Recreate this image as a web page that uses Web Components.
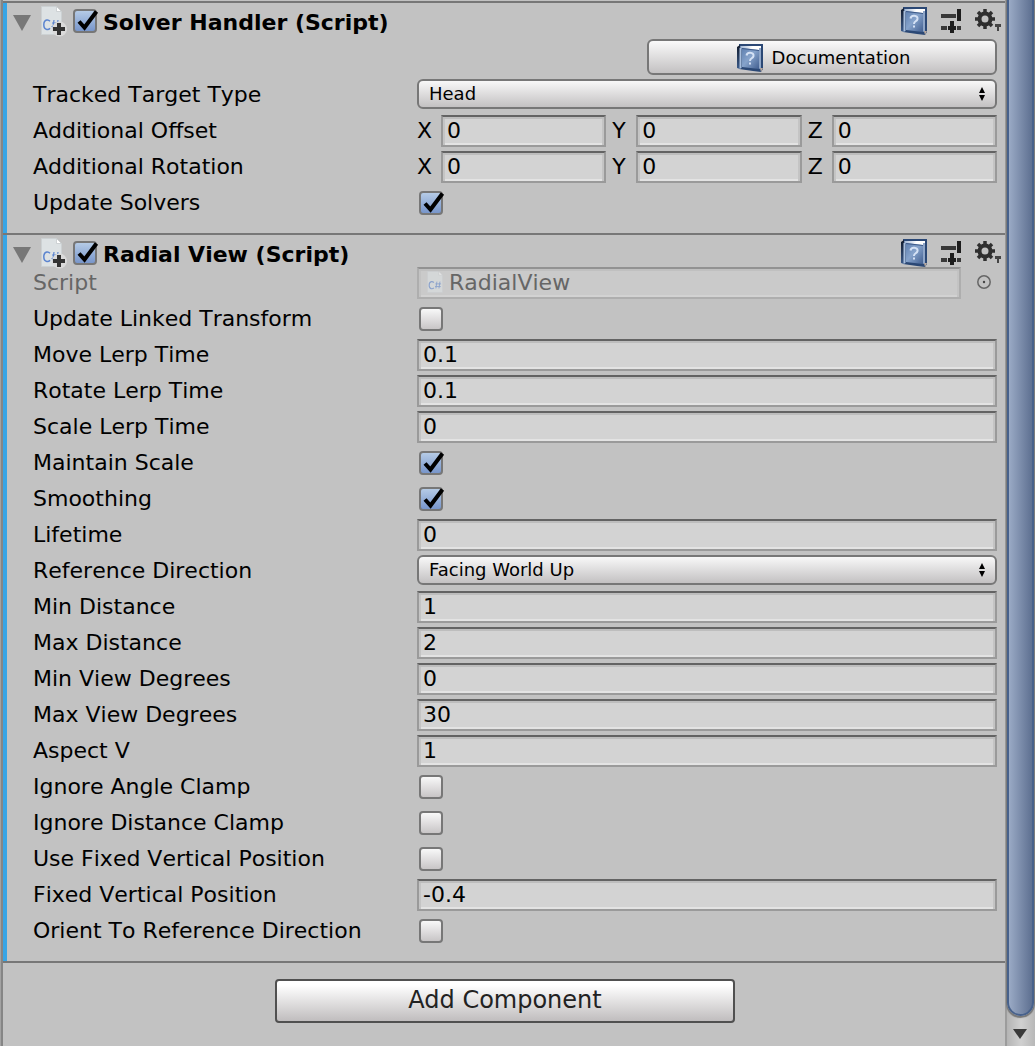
<!DOCTYPE html>
<html lang="en">
<head>
<meta charset="utf-8">
<title>Inspector</title>
<style>
  html, body { height: 100%; }
  body { margin: 0; background: #c2c2c2; color: #000; font: 22px/28px "DejaVu Sans", Verdana, sans-serif; font-kerning: none; overflow: hidden; }
</style>
</head>
<body>
<inspector-window>
  <inspector-section heading="Solver Handler (Script)">
    <doc-button></doc-button>
    <prop-popup label="Tracked Target Type" value="Head"></prop-popup>
    <prop-vector label="Additional Offset"></prop-vector>
    <prop-vector label="Additional Rotation"></prop-vector>
    <prop-toggle label="Update Solvers" checked></prop-toggle>
  </inspector-section>
  <inspector-section heading="Radial View (Script)">
    <prop-object label="Script" value="RadialView"></prop-object>
    <prop-toggle label="Update Linked Transform"></prop-toggle>
    <prop-text label="Move Lerp Time" value="0.1"></prop-text>
    <prop-text label="Rotate Lerp Time" value="0.1"></prop-text>
    <prop-text label="Scale Lerp Time" value="0"></prop-text>
    <prop-toggle label="Maintain Scale" checked></prop-toggle>
    <prop-toggle label="Smoothing" checked></prop-toggle>
    <prop-text label="Lifetime" value="0"></prop-text>
    <prop-popup label="Reference Direction" value="Facing World Up"></prop-popup>
    <prop-text label="Min Distance" value="1"></prop-text>
    <prop-text label="Max Distance" value="2"></prop-text>
    <prop-text label="Min View Degrees" value="0"></prop-text>
    <prop-text label="Max View Degrees" value="30"></prop-text>
    <prop-text label="Aspect V" value="1"></prop-text>
    <prop-toggle label="Ignore Angle Clamp"></prop-toggle>
    <prop-toggle label="Ignore Distance Clamp"></prop-toggle>
    <prop-toggle label="Use Fixed Vertical Position"></prop-toggle>
    <prop-text label="Fixed Vertical Position" value="-0.4"></prop-text>
    <prop-toggle label="Orient To Reference Direction"></prop-toggle>
  </inspector-section>
  <add-button slot="footer">Add Component</add-button>
</inspector-window>

<script>
const BOOK = `<svg width="26" height="28" viewBox="0 0 26 28" aria-hidden="true">
  <defs><linearGradient id="cover" x1="0" y1="0" x2="1" y2="1"><stop offset="0" stop-color="#5f80b0"/><stop offset=".45" stop-color="#86a3cb"/><stop offset="1" stop-color="#425f90"/></linearGradient>
  <linearGradient id="spine" x1="0" y1="0" x2="0" y2="1"><stop offset="0" stop-color="#101a2c"/><stop offset="1" stop-color="#3c5c8c"/></linearGradient>
  <linearGradient id="pages" x1="0" y1="0" x2="1" y2="0"><stop offset="0" stop-color="#9db4d4"/><stop offset=".6" stop-color="#fff"/></linearGradient></defs>
  <path d="M2 0h24v25l-2 3-8-1-14-2z" fill="#2b4875"/>
  <path d="M3 2h21v5L5 5z" fill="url(#pages)"/>
  <path d="M22 4h2v20l-2 1z" fill="#8fa6c8"/>
  <path d="M23 24h3l-2 4z" fill="#b9a99f"/>
  <path d="M0 3l3-2v24l-3-1z" fill="url(#spine)"/>
  <path d="M2.500 4l2-1v21l-2 1z" fill="#a9bfdd"/>
  <path d="M5 4l17 2v19L5 23z" fill="url(#cover)"/>
  <path d="M5 4l17 2v1L5 5z" fill="#3d5a88"/>
  <path d="M9.500 11.500q.5-3 3.800-2.700 3.500.3 3.200 3.200-.2 1.500-2 2.300-1.500.7-1.500 2.700M13 18.500v2" fill="none" stroke="#d5e2f5" stroke-width="2"/>
</svg>`;
const SHEET = `<path d="M.5.500h15l5 5v23H.500z" fill="#dde2e4" stroke="#ccd1d3"/><path d="M15.500.500v5h5z" fill="#fff" stroke="#c5cacc" stroke-width=".8"/>`;
const HASH = `<path d="M9 15.200q-1.300-1.500-3.200-1.200-3 .5-3 4.700t3 4.700q2 .3 3.200-1.200" fill="none" stroke="#5b84cf" stroke-width="1.500"/><path d="M13 14l-1.300 9M17 14l-1.300 9M11 17h7.500M10.500 20.500H18" fill="none" stroke="#5b84cf" stroke-width="1.200"/>`;
const CHECK = `<svg width="26" height="26" viewBox="0 0 26 26" aria-hidden="true"><path d="M6 12.500l5.500 6L23.500 2.500" fill="none" stroke="#000" stroke-width="4"/></svg>`;

const CHECK_CSS = `
  .tick { display: inline-grid; width: 24px; height: 24px; }
  .tick input, .tick svg { grid-area: 1 / 1; }
  .tick input { appearance: none; box-sizing: border-box; width: 24px; height: 24px; margin: 0; border: 2px solid #777; border-radius: 4px; background: linear-gradient(#f8f8f8, #c8c5c6); }
  .tick input:checked { background: linear-gradient(#b5cbe6, #7896cb); }
  .tick svg { display: none; pointer-events: none; overflow: visible; }
  .tick input:checked + svg { display: block; }`;
const FIELD_CSS = `
  .field { box-sizing: border-box; width: 100%; min-width: 0; height: 32px; margin: 2px 0 0; padding: 0 4px 1px; color: inherit; font: inherit; font-kerning: none; border: 2px solid #9a9a9a; border-top-color: #636363; border-radius: 0; outline: 0; background: #d3d3d3; box-shadow: inset 0 2px #bdbdbd, inset 2px 0 #c4c4c4, inset -2px 0 #c4c4c4, inset 0 -2px #e3e3e3; }`;
const ROW_CSS = `
  :host { display: grid; grid-template-columns: 384px minmax(0, 1fr); align-items: center; height: 36px; padding: 0 8px 0 26px; }
  :host > * { min-width: 0; }
  .name { padding-top: 2px; white-space: nowrap; line-height: 34px; }`;

class Base extends HTMLElement {
  connectedCallback() {
    if (this.shadowRoot) return;
    this.attachShadow({ mode: 'open' }).innerHTML = this.render();
  }
  text(name) { return this.getAttribute(name) || ''; }
}

customElements.define('inspector-window', class extends Base {
  render() { return `<style>
    :host { display: flex; height: 100%; overflow: hidden; }
    .edge { flex: none; width: 1px; background: #a2a2a2; border-right: 2px solid #858585; }
    main { flex: 1; min-width: 0; padding-top: 1px; }
    footer { display: flex; justify-content: center; padding: 16px 0 16px 2px; border-top: 2px solid #777; }
  </style><div class="edge"></div><main><slot></slot><footer><slot name="footer"></slot></footer></main><scroll-track></scroll-track>`; }
});

customElements.define('inspector-section', class extends Base {
  render() { return `<style>
    :host { display: block; border-top: 2px solid #777; }
    .body { border-left: 4px solid #37a5e6; padding-bottom: 13px; }
    header { display: flex; align-items: center; height: 23px; padding: 6px 3px 0 6px; }
    .fold { flex: none; margin: 4px 10px 0 0; }
    .file { flex: none; margin-right: 5px; overflow: visible; }
    h2 { flex: 1; margin: 0 0 0 6px; padding-top: 4px; font: bold 22px/28px "DejaVu Sans", Verdana, sans-serif; font-kerning: none; white-space: nowrap; }
    .tools { display: flex; align-items: center; gap: 13px; }
    button { display: block; padding: 0; border: 0; background: none; }
    button svg { display: block; }
    .help { padding-right: 1px; }
    ${CHECK_CSS}
  </style><div class="body"><header>
    <svg class="fold" width="18" height="16" viewBox="0 0 18 16" aria-hidden="true"><path d="M0 0h18L9 16z" fill="#777"/></svg>
    <svg class="file" width="27" height="30" viewBox="0 0 27 30" aria-hidden="true">${SHEET}${HASH}<circle cx="18.500" cy="23" r="7.500" fill="#dadada"/><path d="M18 17v12M12 23h12" stroke="#333" stroke-width="4"/></svg>
    <span class="tick"><input type="checkbox" checked aria-label="Enabled">${CHECK}</span>
    <h2>${this.text('heading')}</h2>
    <div class="tools">
      <button class="help" aria-label="Help">${BOOK}</button>
      <button aria-label="Presets"><svg width="20" height="24" viewBox="0 0 20 24"><path d="M0 7h15M0 19h6M16 19h4" stroke="#383838" stroke-width="4"/><path d="M18 0v12M11 12v12" stroke="#1d1d1d" stroke-width="4"/><path d="M7 19h8" stroke="#1d1d1d" stroke-width="4"/></svg></button>
      <button aria-label="Settings"><svg width="28" height="26" viewBox="0 0 28 26"><circle cx="11" cy="11" r="5.500" fill="none" stroke="#2f2f2f" stroke-width="4"/><path d="M11 1v4M11 17v4M1 11h4M17 11h4M4 4l3 3M15 15l3 3M18 4l-3 3M7 15l-3 3" stroke="#2f2f2f" stroke-width="3.500"/><path d="M21 16h6v3h-2v4h-2v-4h-2z" fill="#444"/></svg></button>
    </div></header><slot></slot></div>`; }
});

customElements.define('doc-button', class extends Base {
  render() { return `<style>
    :host { display: flex; justify-content: flex-end; padding: 7px 8px 1px; }
    button { box-sizing: border-box; display: flex; align-items: center; justify-content: center; gap: 9px; width: 350px; height: 36px; padding: 1px 0 0 3px; color: inherit; font: 18px/24px "DejaVu Sans", Verdana, sans-serif; border: 2px solid #777; border-radius: 6px; background: linear-gradient(#fafafa, #c3c1c2); }
  </style><button>${BOOK}<span>Documentation</span></button>`; }
});

customElements.define('prop-text', class extends Base {
  render() { return `<style>${ROW_CSS}${FIELD_CSS}</style><label class="name" for="f">${this.text('label')}</label><input class="field" id="f" type="text" value="${this.text('value')}">`; }
});

customElements.define('prop-toggle', class extends Base {
  render() { return `<style>${ROW_CSS}${CHECK_CSS} .tick { margin: 2px 0 0 2px; }</style><label class="name" for="f">${this.text('label')}</label><span class="tick"><input id="f" type="checkbox" ${this.hasAttribute('checked') ? 'checked' : ''}>${CHECK}</span>`; }
});

customElements.define('prop-popup', class extends Base {
  render() { return `<style>${ROW_CSS}
    .pop { display: grid; align-items: center; }
    .pop > * { grid-area: 1 / 1; }
    svg { justify-self: end; margin-right: 12px; pointer-events: none; }
    select { appearance: none; box-sizing: border-box; width: 100%; height: 30px; margin: 0; padding: 0 30px 1px 10px; color: inherit; font: 18px/24px "DejaVu Sans", Verdana, sans-serif; border: 2px solid #777; border-radius: 6px; background: linear-gradient(#f8f8f8, #c3c1c2); }
  </style><label class="name" for="f">${this.text('label')}</label><div class="pop"><select id="f"><option>${this.text('value')}</option></select><svg width="6" height="14" viewBox="0 0 6 14" aria-hidden="true"><path d="M0 6L3 0l3 6zM0 8h6L3 14z"/></svg></div>`; }
});

customElements.define('prop-vector', class extends Base {
  render() { return `<style>${ROW_CSS}${FIELD_CSS}
    .axes { display: grid; grid-template-columns: repeat(3, minmax(0, 1fr)); gap: 6px; }
    .axes label { display: grid; grid-template-columns: 24px minmax(0, 1fr); align-items: center; }
    .axes span { padding-top: 2px; }
  </style><span class="name">${this.text('label')}</span><div class="axes" role="group" aria-label="${this.text('label')}">${['X', 'Y', 'Z'].map(a => `<label><span>${a}</span><input class="field" type="text" value="0"></label>`).join('')}</div>`; }
});

customElements.define('prop-object', class extends Base {
  render() { return `<style>${ROW_CSS}${FIELD_CSS}
    :host { color: #666; }
    .line { display: flex; align-items: center; gap: 10px; }
    .box { flex: 1; min-width: 0; display: grid; align-items: center; }
    .box > * { grid-area: 1 / 1; }
    .box svg { margin-left: 10px; }
    .field { padding-left: 30px; background: #cacaca; border-color: #aeaeae; border-top-color: #929292; box-shadow: inset 0 2px #c0c0c0, inset 2px 0 #c3c3c3, inset -2px 0 #c3c3c3, inset 0 -2px #d2d2d2; }
    button { display: block; width: 26px; padding: 0; border: 0; background: none; }
    button svg { display: block; margin: 0 auto; }
  </style><label class="name" for="f">${this.text('label')}</label><div class="line"><div class="box"><input class="field" id="f" type="text" disabled value="${this.text('value')}"><svg width="16" height="22" viewBox="0 0 21 29" opacity=".55" aria-hidden="true">${SHEET}${HASH}</svg></div>
  <button disabled aria-label="Select script"><svg width="14" height="14" viewBox="0 0 14 14"><circle cx="7" cy="7" r="6.200" fill="none" stroke="#666" stroke-width="1.500"/><circle cx="7" cy="7" r="1.200" fill="#444"/></svg></button></div>`; }
});

customElements.define('add-button', class extends Base {
  render() { return `<style>
    :host { display: block; }
    button { box-sizing: border-box; width: 460px; height: 44px; padding: 0 0 2px; color: #222; font: 24px/28px "DejaVu Sans", Verdana, sans-serif; border: 2px solid #505050; border-radius: 4px; background: linear-gradient(#fff 10%, #c0bdbe); }
  </style><button><slot></slot></button>`; }
});

customElements.define('scroll-track', class extends Base {
  render() { return `<style>
    :host { flex: none; display: flex; flex-direction: column; width: 28px; border-left: 2px solid #9c9c9c; background: linear-gradient(90deg, #b4b4b4, #d0d0d0 50%, #b8b8b8); }
    .thumb { flex: 1; box-sizing: border-box; margin-right: 1px; border: 2px solid #47618b; border-top: 0; border-radius: 0 0 14px 14px; background: linear-gradient(90deg, #9aaac5, #5e7091); box-shadow: 0 1px 1px 1px #777; }
    button { display: grid; justify-content: center; align-content: center; width: 26px; height: 30px; padding: 5px 0 0; border: 0; background: none; }
  </style><div class="thumb"></div><button aria-label="Scroll down"><svg width="14" height="10" viewBox="0 0 14 10"><path d="M0 0h14L7 10z" fill="#3a3a3a"/></svg></button>`; }
});
</script>
</body>
</html>
